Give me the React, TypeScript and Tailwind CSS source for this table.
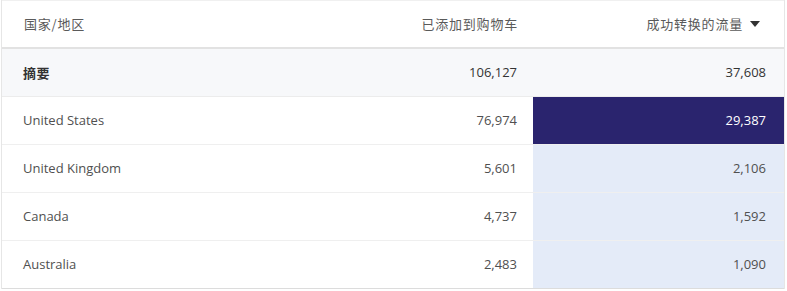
import React from "react";

const rows = [
  { name: "United States", a: "76,974", b: "29,387", dark: true },
  { name: "United Kingdom", a: "5,601", b: "2,106" },
  { name: "Canada", a: "4,737", b: "1,592" },
  { name: "Australia", a: "2,483", b: "1,090" },
];

const font = { fontFamily: '"Open Sans", "Noto Sans CJK SC", sans-serif' };
const cjk = { fontFamily: '"Noto Sans CJK SC", sans-serif' };

export default function App() {
  return (
    <div className="w-[787px] h-[291px] bg-white pl-[1px]" style={font}>
      <div className="w-[784px] border-x border-[#e6e6e6] text-[13px] text-[#505050]">
        <div className="grid grid-cols-[279px_252px_1fr] h-[47px] items-center border-t border-[#f0f0f0] text-[13px] tracking-[0.8px] text-[#5a5a5a]" style={cjk}>
          <div className="pl-[22px]">国家/地区</div>
          <div className="pr-[15px] text-right">已添加到购物车</div>
          <div className="pr-[24px] flex justify-end items-center gap-[7px]">
            <span>成功转换的流量</span>
            <svg width="10" height="6" viewBox="0 0 10 6"><path d="M0 0h10L5 6z" fill="#333" /></svg>
          </div>
        </div>
        <div className="grid grid-cols-[279px_252px_1fr] h-[50px] items-center bg-[#f7f8fa] border-t-2 border-b border-[#e2e2e2] border-b-[#ececec] text-[#333]">
          <div className="pl-[21px] font-semibold text-[13px] tracking-[0.5px]" style={cjk}>摘要</div>
          <div className="pr-[16px] text-right">106,127</div>
          <div className="pr-[18px] text-right">37,608</div>
        </div>
        {rows.map((r, i) => (
          <div key={r.name} className={`grid grid-cols-[279px_252px_1fr] h-[48px] border-b ${i === rows.length - 1 ? "border-[#dcdcdc]" : "border-[#efefef]"}`}>
            <div className="pl-[21px] flex items-center">{r.name}</div>
            <div className="pr-[16px] flex items-center justify-end">{r.a}</div>
            <div className={`pr-[18px] flex items-center justify-end ${r.dark ? "bg-[#2a246e] text-white" : "bg-[#e4ebf8]"}`}>{r.b}</div>
          </div>
        ))}
      </div>
    </div>
  );
}
